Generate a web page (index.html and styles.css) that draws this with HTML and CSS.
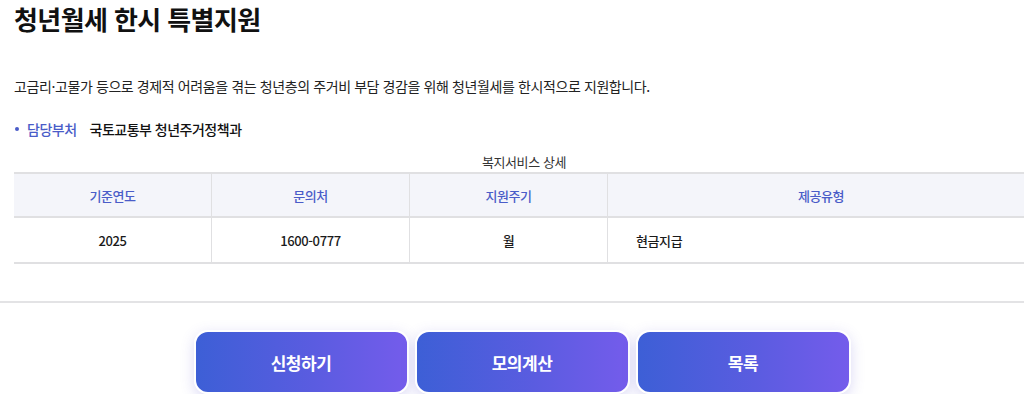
FILE: index.html
```html
<!DOCTYPE html>
<html lang="ko">
<head>
<meta charset="utf-8">
<title>청년월세 한시 특별지원</title>
<link rel="stylesheet" href="styles.css">
</head>
<body>
<div class="page">
  <div class="content">
    <h1 class="title">청년월세 한시 특별지원</h1>
    <p class="desc">고금리·고물가 등으로 경제적 어려움을 겪는 청년층의 주거비 부담 경감을 위해 청년월세를 한시적으로 지원합니다.</p>
    <div class="dept">
      <span class="dept-label">담당부처</span>
      <span class="dept-value">국토교통부 청년주거정책과</span>
    </div>
    <table class="detail">
      <caption>복지서비스 상세</caption>
      <thead>
        <tr>
          <th class="c1">기준연도</th>
          <th class="c2">문의처</th>
          <th class="c3">지원주기</th>
          <th class="c4">제공유형</th>
        </tr>
      </thead>
      <tbody>
        <tr>
          <td>2025</td>
          <td>1600-0777</td>
          <td>월</td>
          <td class="left">현금지급</td>
        </tr>
      </tbody>
    </table>
  </div>
  <hr class="divider">
  <div class="actions">
    <a class="btn" href="#">신청하기</a>
    <a class="btn" href="#">모의계산</a>
    <a class="btn" href="#">목록</a>
  </div>
</div>
</body>
</html>
```

FILE: styles.css
```css
html, body {
  margin: 0;
  padding: 0;
  background: #fff;
  overflow: hidden;
}
body {
  font-family: "Noto Sans CJK KR", "Noto Sans", sans-serif;
  color: #222;
}
.page {
  width: 1048px;
}
.content {
  padding-left: 14px;
  width: 1020px;
}
.title {
  margin: 0;
  padding-top: 1px;
  font-size: 26px;
  line-height: 36px;
  font-weight: 700;
  letter-spacing: -0.6px;
  color: #111;
}
.desc {
  margin: 39px 0 0;
  font-size: 14px;
  line-height: 20px;
  letter-spacing: -0.4px;
  color: #222;
}
.dept {
  margin-top: 23px;
  display: flex;
  align-items: center;
  font-size: 14px;
  line-height: 20px;
  letter-spacing: -0.5px;
}
.dept-label {
  position: relative;
  padding-left: 13px;
  color: #4a5cc8;
  font-weight: 500;
}
.dept-label::before {
  content: "";
  position: absolute;
  left: 1px;
  top: 8px;
  width: 4px;
  height: 4px;
  border-radius: 50%;
  background: #4a5cc8;
}
.dept-value {
  margin-left: 13px;
  font-weight: 500;
  color: #111;
}
.detail {
  margin-top: 14px;
  width: 1020px;
  border-collapse: collapse;
  table-layout: fixed;
  font-size: 13px;
  letter-spacing: -0.4px;
}
.detail caption {
  font-size: 13px;
  line-height: 17px;
  color: #333;
  padding-bottom: 2px;
}
.detail th {
  height: 42px;
  background: #f4f5fa;
  color: #4a5cc8;
  font-weight: 500;
  border-top: 2px solid #e0e0e2;
  border-bottom: 2px solid #e0e0e2;
  border-left: 1px solid #e0e0e2;
  padding: 0;
}
.detail th:first-child,
.detail td:first-child {
  border-left: none;
}
.detail td {
  height: 44px;
  text-align: center;
  font-weight: 500;
  color: #1a1a1a;
  border-bottom: 2px solid #e0e0e2;
  border-left: 1px solid #e0e0e2;
  padding: 0;
}
.detail td.left {
  text-align: left;
  padding-left: 28px;
}
.c1 { width: 197px; }
.c2 { width: 197px; }
.c3 { width: 197px; }
.divider {
  margin: 37px 0 0;
  border: none;
  border-top: 2px solid #e3e3e5;
  width: 1024px;
}
.actions {
  margin-top: 27px;
  width: 1044px;
  display: flex;
  justify-content: center;
  gap: 6px;
}
.btn {
  box-sizing: border-box;
  width: 215px;
  height: 64px;
  border: 2px solid #fff;
  border-radius: 14px;
  background: linear-gradient(90deg, #3d5fd6 0%, #5a5ce0 55%, #745ceb 100%);
  box-shadow: 0 4px 14px rgba(90, 80, 210, 0.22);
  display: flex;
  align-items: center;
  justify-content: center;
  color: #fff;
  font-size: 17px;
  font-weight: 700;
  letter-spacing: -0.5px;
  text-decoration: none;
}
```
